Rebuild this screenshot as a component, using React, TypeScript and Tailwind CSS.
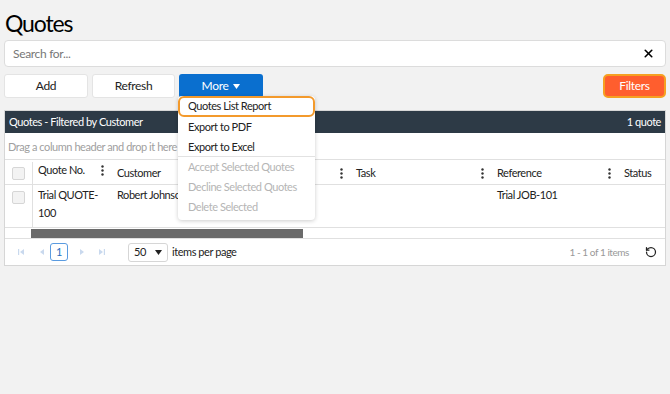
import { X, RotateCw } from "lucide-react";

const cols = "grid grid-cols-[27px_80px_239px_141px_127px_1fr]";

function Kebab() {
  return (
    <svg width="3" height="11" viewBox="0 0 3 11" className="shrink-0">
      <circle cx="1.5" cy="1.5" r="1.2" fill="#333" />
      <circle cx="1.5" cy="5.5" r="1.2" fill="#333" />
      <circle cx="1.5" cy="9.5" r="1.2" fill="#333" />
    </svg>
  );
}

function HeadCell({ label, last }: { label: string; last?: boolean }) {
  return (
    <div className="flex items-center justify-between pl-[5px] pr-[8px]">
      <span>{label}</span>
      {!last && <Kebab />}
    </div>
  );
}

function Check() {
  return <div className="h-[13px] w-[13px] rounded-[2px] border border-[#d6d6d6] bg-[#f3f3f3]" />;
}

function PagerIcon({ kind }: { kind: "first" | "prev" | "next" | "last" }) {
  return (
    <svg width="8" height="8" viewBox="0 0 8 8" fill="#c9d9ee">
      {kind === "first" && (
        <>
          <rect x="1" y="1" width="1.2" height="6" />
          <path d="M7 1 L3 4 L7 7 Z" />
        </>
      )}
      {kind === "prev" && <path d="M6 1 L2 4 L6 7 Z" />}
      {kind === "next" && <path d="M2 1 L6 4 L2 7 Z" />}
      {kind === "last" && (
        <>
          <path d="M1 1 L5 4 L1 7 Z" />
          <rect x="5.8" y="1" width="1.2" height="6" />
        </>
      )}
    </svg>
  );
}

export default function App() {
  return (
    <div className="relative min-h-[394px] bg-[#f2f2f2] px-[4px] pt-[9px] font-['Lato','Liberation_Sans',sans-serif] tracking-[-0.02em] text-[#222]">
      <h1 className="pl-[1px] text-[23px] leading-[28px] tracking-[-0.05em] text-black">Quotes</h1>

      <div className="mt-[3px] flex h-[27px] items-center justify-between rounded-[4px] border border-[#dcdcdc] bg-white pl-[8px] pr-[10px]">
        <span className="text-[12px] text-[#777]">Search for...</span>
        <X size={13} strokeWidth={3} className="text-black" />
      </div>

      <div className="mt-[7px] flex items-center gap-[4px]">
        <button className="h-[24px] w-[84px] rounded-[3px] border border-[#e4e4e4] bg-white text-[12px] text-[#222]">
          Add
        </button>
        <button className="h-[24px] w-[83px] rounded-[3px] border border-[#e4e4e4] bg-white text-[12px] text-[#222]">
          Refresh
        </button>
        <button className="flex h-[24px] w-[84px] items-center justify-center gap-[5px] rounded-[3px] bg-[#0a6fcf] text-[12px] text-white">
          More
          <svg width="7" height="5" viewBox="0 0 7 5">
            <path d="M0 0 H7 L3.5 5 Z" fill="white" />
          </svg>
        </button>
        <button className="ml-auto h-[24px] w-[63px] rounded-[5px] border-2 border-[#f6a021] bg-[#ff5e2e] text-[12px] text-white">
          Filters
        </button>
      </div>

      <div className="mt-[12px] border border-[#d6d6d6] bg-white text-[11px] tracking-[-0.04em]">
        <div className="flex h-[22px] items-center justify-between bg-[#2d3a46] px-[4px] text-white">
          <span>Quotes - Filtered by Customer</span>
          <span>1 quote</span>
        </div>
        <div className="flex h-[27px] items-center border-b border-[#e0e0e0] px-[3px] pt-[2px] text-[#a0a0a0]">
          Drag a column header and drop it here to group by that column
        </div>
        <div className={`${cols} h-[25px] border-b border-[#e0e0e0] pt-[2px]`}>
          <div className="flex items-center justify-center">
            <Check />
          </div>
          <div className="border-l border-[#e0e0e0]">
            <HeadCell label="Quote No." />
          </div>
          <HeadCell label="Customer" />
          <HeadCell label="Task" />
          <HeadCell label="Reference" />
          <HeadCell label="Status" last />
        </div>
        <div className={`${cols} h-[43px] border-b border-[#e0e0e0] leading-[18px]`}>
          <div className="flex justify-center pt-[6px]">
            <Check />
          </div>
          <div className="border-l border-[#e0e0e0] px-[5px] pt-[1px]">
            Trial QUOTE-
            <br />
            100
          </div>
          <div className="overflow-hidden whitespace-nowrap px-[5px] pt-[1px]">Robert Johnson - Robert Johnson</div>
          <div />
          <div className="px-[5px] pt-[1px]">Trial JOB-101</div>
          <div />
        </div>
        <div className="flex h-[11px] items-center border-b border-[#e0e0e0]">
          <div className="ml-[26px] h-[9px] w-[272px] bg-[#6a6a6a]" />
        </div>
        <div className="flex h-[26px] items-center pl-[12px] pr-[8px]">
          <div className="flex items-center gap-[13px]">
            <PagerIcon kind="first" />
            <PagerIcon kind="prev" />
          </div>
          <div className="ml-[4px] flex h-[18px] w-[18px] items-center justify-center rounded-[3px] border border-[#5a9be0] text-[11px] text-[#2a6fc0]">
            1
          </div>
          <div className="ml-[10px] flex items-center gap-[12px]">
            <PagerIcon kind="next" />
            <PagerIcon kind="last" />
          </div>
          <div className="ml-[22px] flex h-[19px] w-[40px] items-center justify-between rounded-[3px] border border-[#d6d6d6] pl-[5px] pr-[5px]">
            <span>50</span>
            <svg width="7" height="5" viewBox="0 0 7 5">
              <path d="M0 0 H7 L3.5 5 Z" fill="#222" />
            </svg>
          </div>
          <span className="ml-[4px]">items per page</span>
          <span className="ml-auto text-[10px] text-[#999]">1 - 1 of 1 items</span>
          <RotateCw size={12} strokeWidth={2.5} className="ml-[16px] -scale-x-100 text-[#222]" />
        </div>
      </div>

      <div className="absolute left-[178px] top-[96px] w-[137px] rounded-[4px] bg-white pb-[3px] text-[11px] tracking-[-0.04em] whitespace-nowrap shadow-[0_1px_4px_rgba(0,0,0,0.2)]">
        <div className="flex h-[21px] items-center rounded-[6px] border-2 border-[#f39a2c] px-[8px] text-[#222]">
          Quotes List Report
        </div>
        <div className="flex h-[20px] items-center px-[10px] pt-[1px]">Export to PDF</div>
        <div className="flex h-[20px] items-center border-b border-[#e2e2e2] px-[10px] pt-[1px]">Export to Excel</div>
        <div className="flex h-[20px] items-center px-[10px] pt-[1px] text-[#b5b5b5]">Accept Selected Quotes</div>
        <div className="flex h-[20px] items-center px-[10px] text-[#b5b5b5]">Decline Selected Quotes</div>
        <div className="flex h-[20px] items-center px-[10px] text-[#b5b5b5]">Delete Selected</div>
      </div>
    </div>
  );
}
